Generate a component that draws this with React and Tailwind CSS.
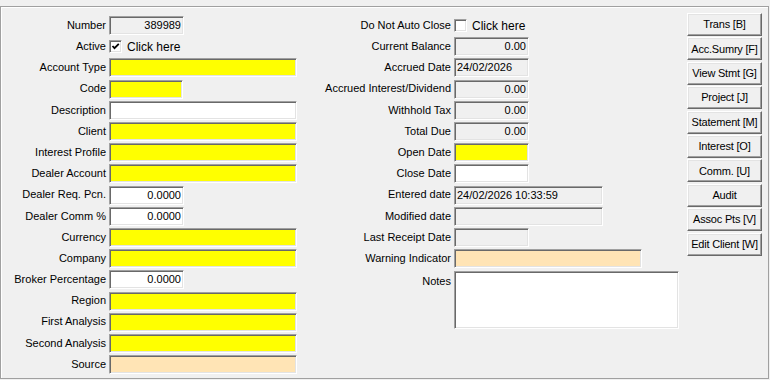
import React from 'react';

const BG = {
  ro: 'bg-[#f0f0f0]',
  y: 'bg-[#ffff00]',
  w: 'bg-white',
  p: 'bg-[#ffe4b5]',
};

const Field = ({ w = 'w-[75px]', h = 'h-[19px]', bg = 'w', value = '', left = false }) => (
  <div
    className={`${w} ${h} ${BG[bg]} border border-t-[#a0a0a0] border-l-[#a0a0a0] border-b-white border-r-white shadow-[inset_1px_1px_0_#696969,inset_-1px_-1px_0_#e3e3e3] flex items-center overflow-hidden ${left ? 'justify-start pl-[2px]' : 'justify-end pr-[2px]'}`}
  >
    <span className="leading-none">{value}</span>
  </div>
);

const Check = ({ checked }) => (
  <div className="flex items-center">
    <div className="w-[13px] h-[13px] bg-white border border-t-[#a0a0a0] border-l-[#a0a0a0] border-b-white border-r-white shadow-[inset_1px_1px_0_#696969,inset_-1px_-1px_0_#e3e3e3] flex items-center justify-center">
      {checked && (
        <svg width="9" height="9" viewBox="0 0 9 9">
          <polyline points="1.5,4 3.5,6.2 7.8,1.8" fill="none" stroke="#000" strokeWidth="1.8" />
        </svg>
      )}
    </div>
    <span className="ml-[5px] text-[12px]">Click here</span>
  </div>
);

const Row = ({ label, labelW, children, top = false }) => (
  <div className={`flex ${top ? 'items-start' : 'items-center h-[21.2px]'}`}>
    <span className={`${labelW} text-right whitespace-nowrap ${top ? 'pt-[2px]' : '-mt-[1px]'}`}>{label}</span>
    <div className="ml-[3px]">{children}</div>
  </div>
);

const leftRows = [
  ['Number', <Field bg="ro" value="389989" />],
  ['Active', <Check checked />],
  ['Account Type', <Field w="w-[188px]" bg="y" />],
  ['Code', <Field w="w-[74px]" bg="y" />],
  ['Description', <Field w="w-[188px]" bg="w" />],
  ['Client', <Field w="w-[188px]" bg="y" />],
  ['Interest Profile', <Field w="w-[188px]" bg="y" />],
  ['Dealer Account', <Field w="w-[188px]" bg="y" />],
  ['Dealer Req. Pcn.', <Field bg="w" value="0.0000" />],
  ['Dealer Comm %', <Field bg="w" value="0.0000" />],
  ['Currency', <Field w="w-[188px]" bg="y" />],
  ['Company', <Field w="w-[188px]" bg="y" />],
  ['Broker Percentage', <Field bg="w" value="0.0000" />],
  ['Region', <Field w="w-[188px]" bg="y" />],
  ['First Analysis', <Field w="w-[188px]" bg="y" />],
  ['Second Analysis', <Field w="w-[188px]" bg="y" />],
  ['Source', <Field w="w-[188px]" bg="p" />],
];

const midRows = [
  ['Do Not Auto Close', <Check />],
  ['Current Balance', <Field bg="ro" value="0.00" />],
  ['Accrued Date', <Field bg="ro" value="24/02/2026" left />],
  ['Accrued Interest/Dividend', <Field bg="ro" value="0.00" />],
  ['Withhold Tax', <Field bg="ro" value="0.00" />],
  ['Total Due', <Field bg="ro" value="0.00" />],
  ['Open Date', <Field bg="y" />],
  ['Close Date', <Field bg="w" />],
  ['Entered date', <Field w="w-[149px]" bg="ro" value="24/02/2026 10:33:59" left />],
  ['Modified date', <Field w="w-[149px]" bg="ro" />],
  ['Last Receipt Date', <Field bg="ro" />],
  ['Warning Indicator', <Field w="w-[188px]" bg="p" />],
];

const buttons = [
  'Trans [B]',
  'Acc.Sumry [F]',
  'View Stmt [G]',
  'Project [J]',
  'Statement [M]',
  'Interest [O]',
  'Comm. [U]',
  'Audit',
  'Assoc Pts [V]',
  'Edit Client [W]',
];

export default function App() {
  return (
    <div
      className="w-[770px] h-[380px] bg-[#f0f0f0] pt-[6px] text-[11px] text-black overflow-hidden"
      style={{ fontFamily: '"Liberation Sans", Arial, sans-serif' }}
    >
      <div className="w-[769px] h-[373px] border border-[#a0a0a0] shadow-[inset_1px_1px_0_#ffffff] flex">
        {/* left column */}
        <div className="w-[299px] pt-[8px] flex flex-col">
          {leftRows.map(([label, field]) => (
            <Row key={label} label={label} labelW="w-[105px]">
              {field}
            </Row>
          ))}
        </div>

        {/* middle column */}
        <div className="w-[387px] pt-[8px] flex flex-col">
          {midRows.map(([label, field]) => (
            <Row key={label} label={label} labelW="w-[151px]">
              {field}
            </Row>
          ))}
          <div className="mt-[2px]">
            <Row label="Notes" labelW="w-[151px]" top>
              <Field w="w-[225px]" h="h-[58px]" bg="w" />
            </Row>
          </div>
        </div>

        {/* buttons */}
        <div className="w-[75px] pt-[6px] flex flex-col gap-[1.4px]">
          {buttons.map((b) => (
            <button
              key={b}
              className="h-[23px] w-[75px] bg-[#f0f0f0] border border-t-white border-l-white border-b-[#696969] border-r-[#696969] shadow-[inset_-1px_-1px_0_#a0a0a0,inset_1px_1px_0_#e3e3e3] flex items-center justify-center whitespace-nowrap tracking-[-0.2px]"
            >
              {b}
            </button>
          ))}
        </div>
      </div>
    </div>
  );
}
